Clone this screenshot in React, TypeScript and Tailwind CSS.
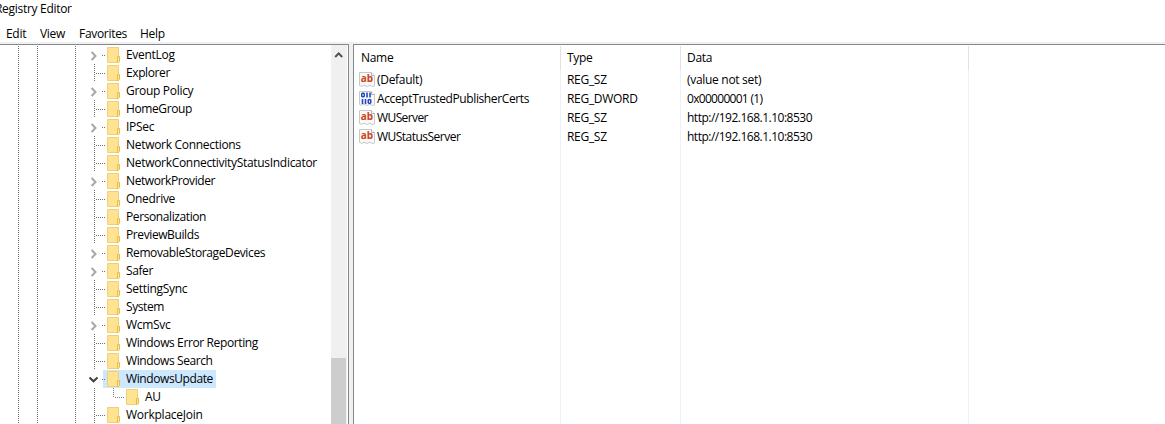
import React from 'react';
import clsx from 'clsx';

interface TreeKey {
  name: string;
  state?: 'closed' | 'open';
  nested?: boolean;
  tracking?: string;
}

interface RegistryValue {
  name: string;
  type: 'REG_SZ' | 'REG_DWORD';
  data: string;
  nameTracking?: string;
  dataTracking?: string;
}

const menus = [
  { label: 'Edit', width: 'w-[34px]' },
  { label: 'View', width: 'w-[39px]' },
  { label: 'Favorites', width: 'w-[61px]' },
  { label: 'Help', width: 'w-[40px]' },
];

const treeKeys: TreeKey[] = [
  { name: 'EventLog', state: 'closed' },
  { name: 'Explorer', tracking: 'tracking-[-0.4px]' },
  { name: 'Group Policy', state: 'closed' },
  { name: 'HomeGroup', tracking: 'tracking-[-0.4px]' },
  { name: 'IPSec', state: 'closed' },
  { name: 'Network Connections' },
  { name: 'NetworkConnectivityStatusIndicator' },
  { name: 'NetworkProvider', state: 'closed', tracking: 'tracking-[-0.4px]' },
  { name: 'Onedrive' },
  { name: 'Personalization', tracking: 'tracking-[-0.4px]' },
  { name: 'PreviewBuilds', tracking: 'tracking-[-0.4px]' },
  { name: 'RemovableStorageDevices', state: 'closed', tracking: 'tracking-[-0.38px]' },
  { name: 'Safer', state: 'closed', tracking: 'tracking-[-0.4px]' },
  { name: 'SettingSync' },
  { name: 'System', tracking: 'tracking-[-0.4px]' },
  { name: 'WcmSvc', state: 'closed' },
  { name: 'Windows Error Reporting', tracking: 'tracking-[-0.38px]' },
  { name: 'Windows Search', tracking: 'tracking-[-0.4px]' },
  { name: 'WindowsUpdate', state: 'open', tracking: 'tracking-[-0.4px]' },
  { name: 'AU', nested: true },
  { name: 'WorkplaceJoin', tracking: 'tracking-[-0.25px]' },
];

const values: RegistryValue[] = [
  { name: '(Default)', type: 'REG_SZ', data: '(value not set)' },
  { name: 'AcceptTrustedPublisherCerts', type: 'REG_DWORD', data: '0x00000001 (1)', nameTracking: 'tracking-[-0.38px]', dataTracking: 'tracking-[-0.7px]' },
  { name: 'WUServer', type: 'REG_SZ', data: 'http://192.168.1.10:8530', nameTracking: 'tracking-[-0.6px]', dataTracking: 'tracking-[-0.5px]' },
  { name: 'WUStatusServer', type: 'REG_SZ', data: 'http://192.168.1.10:8530', nameTracking: 'tracking-[-0.52px]', dataTracking: 'tracking-[-0.5px]' },
];

export default function App() {
  return (
    <div className="flex h-[424px] w-[1165px] flex-col overflow-hidden bg-white font-['Open_Sans',sans-serif] text-[12px] leading-[18px] tracking-[-0.3px] text-black">
      <div className="-ml-[5px] h-[25px] whitespace-nowrap">Registry Editor</div>
      <div className="flex h-[17px] pl-[6px]">
        {menus.map((menu) => (
          <div key={menu.label} className={clsx('shrink-0 whitespace-nowrap', menu.width)}>{menu.label}</div>
        ))}
      </div>
      <div className="flex min-h-0 flex-1 bg-[#f0f0f0] pt-[2px]">
        <div className="flex w-[349px] shrink-0 overflow-hidden border-t border-r border-[#828790] bg-white">
          <div className="w-[331px] shrink-0 pt-px">
            {treeKeys.map((item) => <TreeRow key={item.name} item={item} />)}
          </div>
          <ScrollBar />
        </div>
        <div className="ml-[4px] flex min-w-0 flex-1 border-t border-l border-[#828790] bg-white">
          <Column title="Name" className="w-[207px] pl-[7px]">
            {values.map((value) => (
              <div key={value.name} className="-ml-[2px] flex h-[19px] items-start">
                <ValueIcon type={value.type} />
                <span className={clsx('ml-[2px]', value.nameTracking)}>{value.name}</span>
              </div>
            ))}
          </Column>
          <Column title="Type" className="w-[120px] pl-[6px]">
            {values.map((value) => <div key={value.name} className="h-[19px]">{value.type}</div>)}
          </Column>
          <Column title="Data" className="w-[288px] pl-[6px]">
            {values.map((value) => <div key={value.name} className={clsx('h-[19px]', value.dataTracking)}>{value.data}</div>)}
          </Column>
        </div>
      </div>
    </div>
  );
}

function TreeRow({ item }: { item: TreeKey }) {
  return (
    <div className="flex h-[18px]">
      <Guide className="ml-[18px]" />
      <Guide className="ml-[18px]" />
      <Guide className="ml-[37px]" />
      <Connector state={item.state} nested={item.nested} />
      {item.nested && (
        <svg className="relative -mr-[4px] h-[18px] w-[23px] shrink-0" viewBox="0 0 23 18" fill="none">
          <path d="M10.5 0V10M12 9.5H22" stroke="#808080" strokeDasharray="1 1" shapeRendering="crispEdges" />
        </svg>
      )}
      <div className={clsx('flex items-center pr-[3px] pl-[4px] whitespace-nowrap', item.state === 'open' && 'bg-[#cce8ff]')}>
        <FolderIcon />
        <span className={clsx('ml-[6px]', item.tracking)}>{item.name}</span>
      </div>
    </div>
  );
}

function Guide({ className }: { className: string }) {
  return <div className={clsx('h-[18px] w-px shrink-0 bg-[repeating-linear-gradient(to_bottom,#707070_0_1px,transparent_1px_2px)]', className)} />;
}

function Connector({ state, nested }: { state?: 'closed' | 'open'; nested?: boolean }) {
  let lines = 'M18.5 0V18M20 9.5H30';
  if (state) lines = 'M26 9.5H30';
  if (nested) lines = 'M18.5 0V18';

  return (
    <svg className="relative -mr-[4px] h-[18px] w-[31px] shrink-0" viewBox="0 0 31 18" fill="none">
      <path d={lines} stroke="#707070" strokeDasharray="1 1" shapeRendering="crispEdges" />
      {state === 'closed' && <path d="M15.6 6L19.5 10L15.6 14" stroke="#a6a6a6" strokeWidth="2" />}
      {state === 'open' && <path d="M13.5 7.5L17.5 11.3L21.5 7.5" stroke="#404040" strokeWidth="2" />}
    </svg>
  );
}

function FolderIcon() {
  return (
    <svg className="h-[18px] w-[13px] shrink-0" viewBox="0 0 13 18">
      <path d="M0.5 1.5H11.5V16.5H0.5Z" fill="#ffe391" stroke="#ecd07c" />
      <path d="M10.5 10.5H12.5V15.5L11.5 16.5H10.5Z" fill="#ffe693" stroke="#e6bc45" />
    </svg>
  );
}

function ValueIcon({ type }: { type: RegistryValue['type'] }) {
  return (
    <svg className="mt-px h-[15px] w-[16px] shrink-0" viewBox="0 0 16 15">
      <path d="M0.5 0.5H12.5L15.5 3.5V14L13 14.5L11 13.2L8 14.5L5 13.2L3 14.3L0.5 13.5Z" fill="#f9f9f9" stroke="#c6c8cb" />
      <path d="M12.5 0.5V3.5H15.5" fill="#fff" stroke="#aeb1b5" />
      {type === 'REG_SZ' ? (
        <text x="1.8" y="10" fill="#cb4320" fontFamily="Open Sans" fontSize="10" fontWeight="700" letterSpacing="-0.1">ab</text>
      ) : (
        <g fill="none" stroke="#2347c5" strokeWidth="1.5">
          <rect x="2.75" y="2.25" width="2.5" height="3.5" rx="0.7" />
          <path d="M8 1.5V6.5M11 1.5V6.5M3.5 8V13M6.5 8V13" strokeWidth="1.6" />
          <rect x="9.25" y="8.75" width="2.5" height="3.5" rx="0.7" />
        </g>
      )}
    </svg>
  );
}

function ScrollBar() {
  return (
    <div className="flex w-[16px] shrink-0 flex-col bg-[#f0f0f0]">
      <svg className="h-[17px] w-[16px]" viewBox="0 0 16 17" fill="none">
        <path d="M4.2 12L7.7 8.4L11.2 12" stroke="#505050" strokeWidth="2" />
      </svg>
      <div className="mt-[296px] w-[15px] flex-1 bg-[#cdcdcd]" />
    </div>
  );
}

function Column({ title, className, children }: { title: string; className: string; children: React.ReactNode }) {
  return (
    <div className={clsx('flex shrink-0', className)}>
      <div className="flex-1 whitespace-nowrap">
        <div className="h-[26px] pt-[4px]">{title}</div>
        {children}
      </div>
      <div className="mt-px flex w-px flex-col">
        <div className="h-[24px] bg-[#e2e2e2]" />
        <div className="flex-1 bg-[#edf1f4]" />
      </div>
    </div>
  );
}
